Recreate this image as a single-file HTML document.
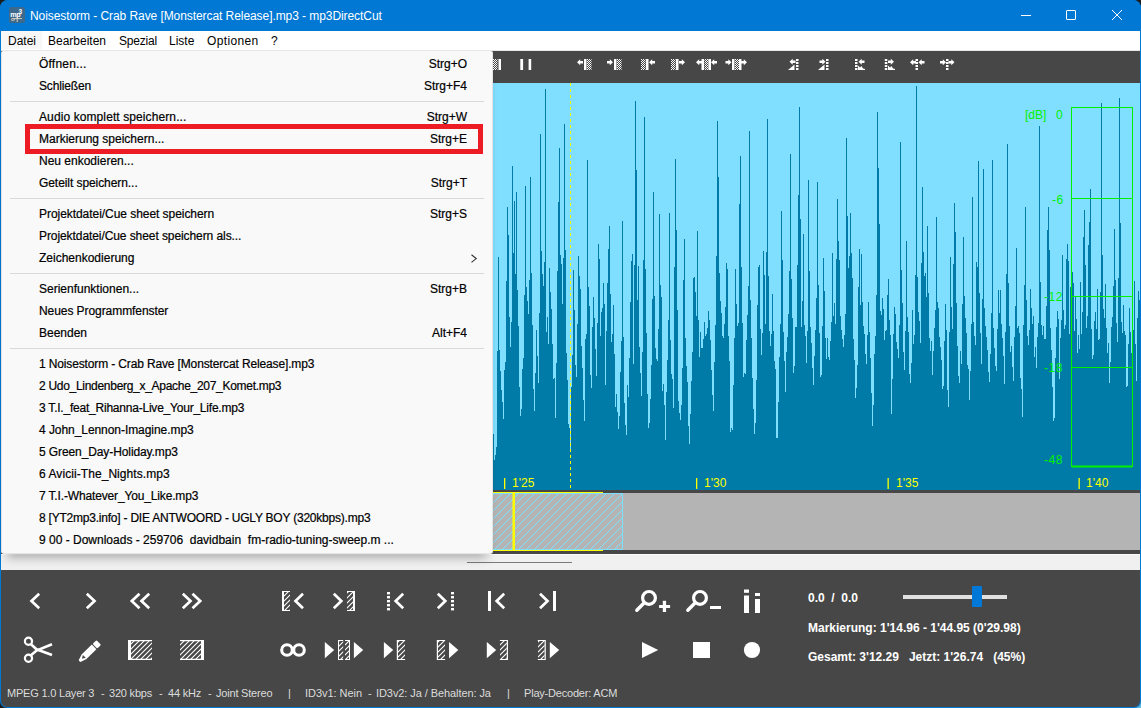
<!DOCTYPE html>
<html><head><meta charset="utf-8">
<style>
*{margin:0;padding:0;box-sizing:border-box}
html,body{width:1141px;height:708px;overflow:hidden;background:#1c1c1c;font-family:"Liberation Sans",sans-serif}
#win{position:absolute;left:0;top:0;width:1141px;height:708px;background:#0078d4;border-radius:8px 8px 7px 7px;overflow:hidden}
.a{position:absolute}
.t{position:absolute;white-space:nowrap;font-size:12px;line-height:14px}
#title{left:0;top:0;width:1141px;height:31px;background:#0078d4}
#menubar{left:1px;top:31px;width:1139px;height:20px;background:#fff;border-bottom:1px solid #e6e6e6}
#tb{left:1px;top:51px;width:1139px;height:32px;background:#474747}
#ov{left:1px;top:490px;width:1139px;height:64px;background:#474747}
#split{left:1px;top:554px;width:1139px;height:16px;background:#f0f0f0}
#ctrl{left:1px;top:570px;width:1139px;height:137px;background:#474747;border-radius:0 0 6px 6px}
#menu{left:1px;top:51px;width:492px;height:503px;background:#f9f9f9;border:1px solid #e4e4e4;border-top:none;border-radius:2px 2px 3px 3px;box-shadow:0 9px 10px -6px rgba(0,0,0,.32)}
.mi{position:absolute;left:37px;font-size:12px;line-height:14px;color:#000;white-space:nowrap;-webkit-text-stroke:0.2px #000}
.sc{position:absolute;right:25px;font-size:12px;line-height:14px;color:#000;white-space:nowrap;text-align:right;-webkit-text-stroke:0.2px #000}
.sep{position:absolute;left:8px;width:474px;height:1px;background:#d9d9d9}
.st{position:absolute;top:687px;color:#dcdcdc;font-size:11px;line-height:13px;white-space:nowrap;letter-spacing:-0.2px}
.wt{position:absolute;color:#fff;font-size:12px;line-height:14px;font-weight:bold;white-space:nowrap}
.yl{position:absolute;top:476px;color:#ffff00;font-size:12px;line-height:14px;white-space:nowrap}
.gr{position:absolute;color:#00f000;font-size:12px;line-height:14px;white-space:nowrap}
</style></head><body>
<div class="a" style="left:1121px;top:688px;width:20px;height:20px;background:#64b8d8"></div>
<div class="a" style="left:0;top:688px;width:20px;height:20px;background:#1a1a1a"></div>
<div id="win">
 <div class="a" id="title">
  <svg class="a" style="left:9px;top:7px" width="16" height="16" viewBox="0 0 16 16">
   <rect x="0" y="0" width="16" height="16" rx="2" fill="#3d6a8c"/>
   <text x="1.3" y="9.6" font-size="7.2" font-family="Liberation Sans" fill="#fff" font-weight="bold" letter-spacing="-0.4">mp</text>
   <text x="9.6" y="7.2" font-size="6.5" font-family="Liberation Sans" fill="#fff" font-weight="bold">3</text>
   <path d="M2.5 11.6H13M8.2 9.5V15M2 12.8Q3.5 14 6 12.6" stroke="#e6d9c6" stroke-width="0.9" fill="none"/>
  </svg>
  <div class="t" style="left:30px;top:9px;color:#fff;letter-spacing:-0.07px">Noisestorm - Crab Rave [Monstercat Release].mp3 - mp3DirectCut</div>
  <div class="a" style="left:1021px;top:15px;width:10px;height:1px;background:#fff"></div>
  <div class="a" style="left:1066px;top:10px;width:10px;height:10px;border:1px solid #fff;border-radius:1px"></div>
  <svg class="a" style="left:1111px;top:9px" width="12" height="12" viewBox="0 0 12 12"><path d="M1 1L11 11M11 1L1 11" stroke="#fff" stroke-width="1"/></svg>
 </div>
 <div class="a" id="menubar">
  <div class="a" style="left:0;top:0;width:41px;height:18px;background:#f7f7f7"></div>
  <div class="t" style="left:7px;top:3px">Datei</div>
  <div class="t" style="left:47px;top:3px">Bearbeiten</div>
  <div class="t" style="left:118px;top:3px;letter-spacing:-0.2px">Spezial</div>
  <div class="t" style="left:168px;top:3px">Liste</div>
  <div class="t" style="left:206px;top:3px;letter-spacing:0.35px">Optionen</div>
  <div class="t" style="left:270px;top:3px">?</div>
 </div>
 <div class="a" id="tb"></div>
 <svg class="a" style="left:0;top:0" width="1141" height="570" viewBox="0 0 1141 570">
  <defs>
   <pattern id="chk" width="2" height="2" patternUnits="userSpaceOnUse">
    <rect x="0" y="0" width="1" height="1" fill="#fff"/><rect x="1" y="1" width="1" height="1" fill="#fff"/>
   </pattern>
   <pattern id="hatch" x="3" y="1" width="8" height="8" patternUnits="userSpaceOnUse">
    <path d="M-1 9L9 -1M-5 5L5 -5M3 13L13 3" stroke="#80dfff" stroke-width="1"/>
   </pattern>
   <g id="al"><path d="M0 2.75L3.2 -0.2V1.5H6V4H3.2V5.7Z" fill="#fff"/></g>
   <g id="ar"><path d="M6 2.75L2.8 -0.2V1.5H0V4H2.8V5.7Z" fill="#fff"/></g>
   <g id="dots"><rect x="0" y="0" width="2.5" height="2" fill="#fff"/><rect x="0" y="3" width="2.5" height="2" fill="#fff"/><rect x="0" y="6" width="2.5" height="2" fill="#fff"/><rect x="0" y="9" width="2.5" height="2" fill="#fff"/></g>
  </defs>
  <!-- waveform -->
  <rect x="1" y="83" width="1139" height="407" fill="#80dfff"/>
  <path d="M493 490V434H494V460H495V455H496V447H497V351H498V257H499V350H500V371H501V390H502V402H503V419H504V370H505V362H506V281H507V207H508V235H509V317H510V347H511V322H512V166H513V253H514V201H515V274H516V192H517V290H518V326H519V387H520V416H521V409H522V369H523V358H524V295H525V186H526V287H527V301H528V314H529V280H530V177H531V273H532V325H533V389H534V411H535V373H536V330H537V356H538V383H539V313H540V134H541V251H542V274H543V286H544V262H545V89H546V332H547V317H548V344H549V268H550V292H551V309H552V344H553V379H554V378H555V418H556V363H557V271H558V202H559V148H560V255H561V264H562V304H563V258H564V124H565V250H566V353H567V380H568V424H569V428H570V451H571V387H572V355H573V270H574V310H575V365H576V377H577V324H578V256H579V276H580V289H581V346H582V368H583V400H584V421H585V339H586V334H587V160H588V287H589V306H590V375H591V388H592V327H593V297H594V318H595V349H596V376H597V323H598V244H599V259H600V336H601V312H602V308H603V283H604V304H605V385H606V331H607V283H608V249H609V226H610V294H611V342H612V334H613V305H614V354H615V407H616V394H617V412H618V429H619V416H620V372H621V341H622V221H623V337H624V403H625V425H626V435H627V385H628V397H629V358H630V302H631V261H632V254H633V364H634V265H635V101H636V170H637V300H638V266H639V347H640V373H641V396H642V352H643V260H644V117H645V269H646V333H647V394H648V428H649V423H650V399H651V365H652V299H653V192H654V296H655V348H656V359H657V361H658V329H659V214H660V285H661V297H662V391H663V384H664V405H665V440H666V392H667V360H668V320H669V213H670V340H671V374H672V379H673V408H674V267H675V159H676V230H677V310H678V401H679V413H680V420H681V405H682V368H683V280H684V239H685V338H686V366H687V382H688V426H689V444H690V414H691V381H692V352H693V278H694V277H695V292H696V316H697V231H698V320H699V357H700V332H701V348H702V348H703V339H704V322H705V336H706V334H707V328H708V311H709V320H710V340H711V370H712V395H713V411H714V362H715V325H716V256H717V121H718V177H719V273H720V301H721V313H722V336H723V338H724V324H725V307H726V263H727V269H728V336H729V361H730V432H731V428H732V430H733V385H734V338H735V269H736V304H737V326H738V323H739V204H740V156H741V267H742V323H743V377H744V373H745V374H746V340H747V315H748V286H749V131H750V300H751V338H752V378H753V409H754V434H755V423H756V380H757V305H758V267H759V265H760V329H761V355H762V333H763V251H764V275H765V324H766V252H767V119H768V276H769V331H770V346H771V334H772V294H773V331H774V361H775V369H776V438H777V438H778V402H779V357H780V324H781V211H782V260H783V332H784V361H785V392H786V352H787V337H788V314H789V271H790V154H791V279H792V318H793V373H794V366H795V327H796V327H797V265H798V195H799V107H800V219H801V327H802V301H803V234H804V325H805V336H806V363H807V331H808V180H809V271H810V327H811V343H812V368H813V385H814V356H815V330H816V298H817V182H818V285H819V333H820V377H821V375H822V326H823V258H824V291H825V338H826V359H827V338H828V357H829V360H830V341H831V322H832V253H833V316H834V303H835V324H836V259H837V199H838V241H839V260H840V316H841V330H842V339H843V347H844V335H845V314H846V138H847V216H848V268H849V256H850V213H851V253H852V278H853V339H854V360H855V398H856V388H857V365H858V287H859V249H860V305H861V254H862V302H863V326H864V334H865V354H866V364H867V335H868V302H869V332H870V358H871V393H872V426H873V405H874V354H875V336H876V295H877V112H878V168H879V224H880V311H881V315H882V298H883V309H884V340H885V331H886V330H887V295H888V279H889V320H890V335H891V414H892V379H893V334H894V307H895V314H896V342H897V349H898V358H899V325H900V142H901V270H902V303H903V352H904V370H905V331H906V241H907V317H908V332H909V374H910V383H911V363H912V310H913V344H914V335H915V275H916V86H917V277H918V312H919V321H920V343H921V263H922V187H923V252H924V276H925V273H926V297H927V226H928V293H929V338H930V351H931V341H932V375H933V351H934V328H935V310H936V217H937V302H938V308H939V337H940V347H941V360H942V389H943V386H944V341H945V304H946V330H947V390H948V407H949V332H950V257H951V307H952V329H953V264H954V203H955V232H956V303H957V346H958V376H959V383H960V351H961V364H962V304H963V237H964V296H965V318H966V333H967V365H968V369H969V400H970V371H971V324H972V197H973V322H974V336H975V345H976V262H977V267H978V161H979V293H980V333H981V364H982V299H983V169H984V308H985V326H986V337H987V350H988V372H989V382H990V354H991V313H992V160H993V328H994V348H995V366H996V371H997V329H998V290H999V313H1000V290H1001V324H1002V338H1003V356H1004V384H1005V332H1006V274H1007V144H1008V283H1009V326H1010V352H1011V346H1012V367H1013V381H1014V337H1015V306H1016V248H1017V328H1018V326H1019V333H1020V378H1021V389H1022V417H1023V325H1024V285H1025V207H1026V300H1027V336H1028V345H1029V330H1030V289H1031V308H1032V324H1033V316H1034V357H1035V347H1036V368H1037V337H1038V323H1039V126H1040V282H1041V325H1042V335H1043V326H1044V339H1045V339H1046V306H1047V230H1048V207H1049V250H1050V328H1051V350H1052V387H1053V421H1054V418H1055V358H1056V327H1057V311H1058V319H1059V379H1060V338H1061V320H1062V255H1063V310H1064V329H1065V325H1066V259H1067V244H1068V261H1069V334H1070V287H1071V175H1072V272H1073V283H1074V331H1075V296H1076V319H1077V353H1078V335H1079V349H1080V282H1081V334H1082V312H1083V237H1084V210H1085V265H1086V328H1087V316H1088V245H1089V222H1090V189H1091V329H1092V359H1093V355H1094V321H1095V312H1096V329H1097V289H1098V340H1099V339H1100V292H1101V103H1102V255H1103V309H1104V318H1105V284H1106V328H1107V353H1108V343H1109V383H1110V362H1111V327H1112V317H1113V286H1114V229H1115V280H1116V323H1117V342H1118V278H1119V98H1120V223H1121V322H1122V333H1123V305H1124V331H1125V335H1126V387H1127V386H1128V344H1129V308H1130V332H1131V353H1132V363H1133V330H1134V281H1135V344H1136V381H1137V318H1138V291H1139V300H1140V490Z" fill="#007ba7"/>
  <!-- toolbar icons -->
  <g fill="#fff">
   <rect x="493" y="59" width="4.5" height="11" fill="url(#chk)"/><rect x="498.5" y="59" width="2.5" height="11"/>
   <rect x="520.3" y="59" width="2.8" height="11"/><rect x="528.6" y="59" width="2.6" height="11"/>
   <use href="#al" x="577" y="59.5"/><rect x="584" y="59" width="2.5" height="11"/><rect x="587" y="59" width="4.5" height="11" fill="url(#chk)"/>
   <use href="#ar" x="607" y="59.5"/><rect x="614" y="59" width="2.5" height="11"/><rect x="617" y="59" width="4.5" height="11" fill="url(#chk)"/>
   <rect x="641" y="59" width="4.5" height="11" fill="url(#chk)"/><rect x="646" y="59" width="2.5" height="11"/><use href="#al" x="649" y="59.5"/>
   <rect x="671" y="59" width="4.5" height="11" fill="url(#chk)"/><rect x="676" y="59" width="2.5" height="11"/><use href="#ar" x="679" y="59.5"/>
   <use href="#al" x="696" y="59.5"/><rect x="701.5" y="59" width="2.5" height="11"/><rect x="704.5" y="59" width="4" height="11" fill="url(#chk)"/><rect x="708.5" y="59" width="2.5" height="11"/><use href="#al" x="711" y="59.5"/>
   <use href="#ar" x="725.5" y="59.5"/><rect x="732" y="59" width="2.5" height="11"/><rect x="735" y="59" width="4" height="11" fill="url(#chk)"/><rect x="739" y="59" width="2.5" height="11"/><use href="#ar" x="741" y="59.5"/>
   <use href="#al" x="789.5" y="59"/><path d="M788 70L794.5 64.5V70Z"/><use href="#dots" x="796" y="59"/>
   <use href="#ar" x="819.5" y="59"/><path d="M818 70L824.5 64.5V70Z"/><use href="#dots" x="826" y="59"/>
   <use href="#dots" x="855" y="59"/><use href="#al" x="858.5" y="59"/><path d="M858 70V65.5L860 67.5L861.5 66L863 68.5L865 69V70Z"/>
   <use href="#dots" x="884.8" y="59"/><use href="#ar" x="888" y="59"/><path d="M888 70V65.5L890 67.5L891.5 66L893 68.5L895 69V70Z"/>
   <use href="#al" x="910" y="59.5"/><use href="#dots" x="915.5" y="59"/><use href="#al" x="918.5" y="59.5"/>
   <use href="#ar" x="940" y="59.5"/><use href="#dots" x="946" y="59"/><use href="#ar" x="948.5" y="59.5"/>
  </g>
  <!-- dB meter -->
  <g stroke="#00f000" stroke-width="1" fill="none">
   <rect x="1071.5" y="107.5" width="61" height="359"/>
   <path d="M1071.5 198.5H1132.5M1071.5 296.5H1132.5M1071.5 367.5H1132.5"/>
   <path d="M1071.5 466.5H1132.5" stroke-width="2"/>
  </g>
  <!-- yellow dashed cursor -->
  <path d="M570.5 83V490" stroke="#ffff00" stroke-width="1" stroke-dasharray="3 3"/>
  <!-- yellow ticks -->
  <g fill="#ffff00"><rect x="504" y="478" width="1.3" height="11"/><rect x="696" y="478" width="1.3" height="11"/><rect x="887.5" y="478" width="1.3" height="11"/><rect x="1078.5" y="478" width="1.3" height="11"/></g>
  <!-- overview -->
  <rect x="1" y="490" width="1139" height="64" fill="#474747"/>
  <rect x="1" y="493" width="1139" height="57" fill="#b4b4b4"/>
  <rect x="1" y="494" width="621" height="55" fill="url(#hatch)"/>
  <path d="M1 493.5H622.5V549.5H1" fill="none" stroke="#80dfff" stroke-width="1"/>
  <rect x="1" y="492" width="602" height="1" fill="#ffff00"/>
  <rect x="1" y="550" width="602" height="1" fill="#ffff00"/>
  <rect x="512.5" y="493" width="2.5" height="57" fill="#ffff00"/>
  <rect x="1" y="554" width="1139" height="16" fill="#f0f0f0"/>
  <rect x="1" y="554" width="1139" height="1" fill="#fafafa"/>
  <rect x="467" y="562" width="105" height="1" fill="#7a7a7a"/>
 </svg>
 <div class="yl" style="left:512px">1'25</div>
 <div class="yl" style="left:704px">1'30</div>
 <div class="yl" style="left:896px">1'35</div>
 <div class="yl" style="left:1086px">1'40</div>
 <div class="gr" style="left:1025px;top:108px">[dB]</div>
 <div class="gr" style="left:1056px;top:108px">0</div>
 <div class="gr" style="left:1052px;top:193px;letter-spacing:0.5px">-6</div>
 <div class="gr" style="left:1044px;top:290px;letter-spacing:0.6px">-12</div>
 <div class="gr" style="left:1044px;top:361px;letter-spacing:0.6px">-18</div>
 <div class="gr" style="left:1044px;top:453px;letter-spacing:0.6px">-48</div>

 <div class="a" id="ctrl"></div>
 <svg class="a" style="left:0;top:570px" width="1141" height="138" viewBox="0 570 1141 138">
  <defs>
   <pattern id="h2" x="0" y="0" width="5" height="5" patternUnits="userSpaceOnUse">
    <path d="M-1 6L6 -1M-1 1L1 -1M4 6L6 4" stroke="#fff" stroke-width="1.1"/>
   </pattern>
  </defs>
  <g fill="none" stroke="#fff" stroke-width="2.7" stroke-linecap="butt" stroke-linejoin="miter">
   <path d="M39.2 593.8L31.5 601L39.2 608.2"/>
   <path d="M86.8 593.8L94.5 601L86.8 608.2"/>
   <path d="M139.5 593.8L131.8 601L139.5 608.2M149.2 593.8L141.5 601L149.2 608.2"/>
   <path d="M182.8 593.8L190.5 601L182.8 608.2M192.5 593.8L200.2 601L192.5 608.2"/>
   <path d="M303 593.8L295.5 601L303 608.2"/>
   <path d="M333.8 593.8L341.3 601L333.8 608.2"/>
   <path d="M403.2 593.8L395.7 601L403.2 608.2"/>
   <path d="M437.8 593.8L445.3 601L437.8 608.2"/>
   <path d="M504.2 593.8L496.7 601L504.2 608.2"/>
   <path d="M540 593.8L547.5 601L540 608.2"/>
  </g>
  <g fill="#fff">
   <rect x="387" y="592" width="3" height="2.4"/><rect x="387" y="596" width="3" height="2.4"/><rect x="387" y="600" width="3" height="2.4"/><rect x="387" y="604" width="3" height="2.4"/><rect x="387" y="608" width="3" height="2.4"/>
   <rect x="451" y="592" width="3" height="2.4"/><rect x="451" y="596" width="3" height="2.4"/><rect x="451" y="600" width="3" height="2.4"/><rect x="451" y="604" width="3" height="2.4"/><rect x="451" y="608" width="3" height="2.4"/>
   <rect x="488" y="591" width="3" height="20"/>
   <rect x="553" y="591" width="3" height="20"/>
  </g>
  <!-- row1 brackets -->
  <rect x="284" y="592" width="6" height="18" fill="url(#h2)"/>
  <path d="M282 591H290V592H284V610H290V611H282Z" fill="#fff"/>
  <rect x="347" y="592" width="6" height="18" fill="url(#h2)"/>
  <path d="M355 591H347V592H353V610H347V611H355Z" fill="#fff"/>
  <!-- scissors -->
  <g fill="none" stroke="#fff" stroke-width="2.2">
   <circle cx="28.5" cy="641.3" r="3.6"/><circle cx="28.5" cy="658.3" r="3.6"/>
  </g>
  <path d="M31 644.3L36.5 649.3L52 655" stroke="#fff" stroke-width="2.6" fill="none"/>
  <path d="M31 655.3L36.5 650.5L52 644.2" stroke="#fff" stroke-width="2.6" fill="none"/>
  <g transform="translate(79.6,661) rotate(-44)">
   <path d="M0 -1.3Q-0.6 0 0 1.3L6.3 3.3H20.2V-3.3H6.3Z" fill="#fff"/>
   <path d="M3.2 0L6.6 -2V2Z" fill="#474747"/>
   <rect x="21.2" y="-3.3" width="5.5" height="6.6" rx="1.2" fill="#fff"/>
  </g>
  <!-- big brackets -->
  <rect x="131" y="641" width="21" height="18" fill="url(#h2)"/>
  <path d="M128 640H152V641.3H131V658.7H152V660H128Z" fill="#fff"/>
  <rect x="180" y="641" width="21" height="18" fill="url(#h2)"/>
  <path d="M204 640H180V641.3H201V658.7H180V660H204Z" fill="#fff"/>
  <!-- infinity -->
  <g fill="none" stroke="#fff" stroke-width="3.1"><circle cx="287" cy="650" r="5.3"/><circle cx="299" cy="650" r="5.3"/></g>
  <g fill="#fff">
   <path d="M324.8 642V658.2L334.2 650.1Z"/><path d="M353.9 642V658.2L363.2 650.1Z"/>
   <path d="M383.9 642V658.2L393.2 650.1Z"/>
   <path d="M449 642V658.2L458.3 650.1Z"/>
   <path d="M486.8 642V658.2L496.2 650.1Z"/>
   <path d="M549.8 642V658.2L559.2 650.1Z"/>
   <path d="M642 642V658L658.2 650Z"/>
   <rect x="693" y="642" width="17" height="16"/>
   <circle cx="752" cy="650" r="8.1"/>
   <rect x="744" y="589.5" width="5" height="3.3"/><rect x="744" y="595.5" width="5" height="17.5"/>
   <rect x="755" y="593" width="5" height="3"/><rect x="755" y="599" width="5" height="14"/>
   <rect x="659.1" y="605" width="11" height="3"/><rect x="662.8" y="600.8" width="3.3" height="11.2"/>
   <rect x="710" y="606" width="11" height="3"/>
  </g>
  <!-- small brackets row2 -->
  <rect x="339" y="641" width="4.2" height="18" fill="url(#h2)"/><path d="M338 640H343.2V641H339V659H343.2V660H338Z" fill="#fff"/>
  <rect x="345" y="641" width="4" height="18" fill="url(#h2)"/><path d="M350 640H345V641H349V659H345V660H350Z" fill="#fff"/>
  <rect x="398" y="641" width="7" height="18" fill="url(#h2)"/><path d="M396.8 640H405.1V641H398V659H405.1V660H396.8Z" fill="#fff"/>
  <rect x="438" y="641" width="7" height="18" fill="url(#h2)"/><path d="M436.8 640H445.1V641H438V659H445.1V660H436.8Z" fill="#fff"/>
  <rect x="500" y="641" width="6.8" height="18" fill="url(#h2)"/><path d="M508 640H499.9V641H506.8V659H499.9V660H508Z" fill="#fff"/>
  <rect x="538" y="641" width="6.6" height="18" fill="url(#h2)"/><path d="M545.8 640H537.8V641H544.6V659H537.8V660H545.8Z" fill="#fff"/>
  <!-- magnifiers -->
  <g fill="none" stroke="#fff">
   <circle cx="649" cy="597.9" r="6.4" stroke-width="3.2"/><path d="M643.5 603.5L636.8 610.2" stroke-width="3.4" stroke-linecap="round"/>
   <circle cx="700" cy="597.9" r="6.4" stroke-width="3.2"/><path d="M694.5 603.5L687.8 610.2" stroke-width="3.4" stroke-linecap="round"/>
  </g>
  <!-- slider -->
  <rect x="903" y="595" width="104" height="4" fill="#e0e0e0"/>
  <rect x="972" y="586" width="10" height="21" fill="#0078d7" rx="1"/>
 </svg>
 <div class="wt" style="left:808px;top:591px">0.0&nbsp; /&nbsp; 0.0</div>
 <div class="wt" style="left:808px;top:621px">Markierung: 1'14.96 - 1'44.95 (0'29.98)</div>
 <div class="wt" style="left:808px;top:650px">Gesamt: 3'12.29&nbsp;&nbsp; Jetzt: 1'26.74&nbsp;&nbsp; (45%)</div>
 <div class="st" style="left:7px">MPEG 1.0 Layer 3</div>
 <div class="st" style="left:101px">-</div>
 <div class="st" style="left:109px">320 kbps</div>
 <div class="st" style="left:159px">-</div>
 <div class="st" style="left:168px">44 kHz</div>
 <div class="st" style="left:208px">-</div>
 <div class="st" style="left:216px">Joint Stereo</div>
 <div class="st" style="left:288px">|</div>
 <div class="st" style="left:305px;letter-spacing:-0.04px">ID3v1: Nein</div>
 <div class="st" style="left:368px">-</div>
 <div class="st" style="left:376px;letter-spacing:-0.08px">ID3v2: Ja / Behalten: Ja</div>
 <div class="st" style="left:507px">|</div>
 <div class="st" style="left:524px">Play-Decoder: ACM</div>

 <div class="a" id="menu">
  <div class="mi" style="top:6px;letter-spacing:0.2px">Öffnen...</div><div class="sc" style="top:6px">Strg+O</div>
  <div class="mi" style="top:28px;letter-spacing:-0.14px">Schließen</div><div class="sc" style="top:28px">Strg+F4</div>
  <div class="sep" style="top:50px"></div>
  <div class="mi" style="top:59px;letter-spacing:0.1px">Audio komplett speichern...</div><div class="sc" style="top:59px">Strg+W</div>
  <div class="mi" style="top:81px">Markierung speichern...</div><div class="sc" style="top:81px">Strg+E</div>
  <div class="mi" style="top:103px">Neu enkodieren...</div>
  <div class="mi" style="top:125px;letter-spacing:-0.07px">Geteilt speichern...</div><div class="sc" style="top:125px">Strg+T</div>
  <div class="sep" style="top:147px"></div>
  <div class="mi" style="top:156px;letter-spacing:-0.05px">Projektdatei/Cue sheet speichern</div><div class="sc" style="top:156px">Strg+S</div>
  <div class="mi" style="top:178px;letter-spacing:-0.08px">Projektdatei/Cue sheet speichern als...</div>
  <div class="mi" style="top:200px">Zeichenkodierung</div><svg class="a" style="left:468px;top:203px" width="10" height="10" viewBox="0 0 10 10"><path d="M1.5 0.8L6.2 4.6L1.5 8.4" fill="none" stroke="#333" stroke-width="1.1"/></svg>
  <div class="sep" style="top:222px"></div>
  <div class="mi" style="top:231px">Serienfunktionen...</div><div class="sc" style="top:231px">Strg+B</div>
  <div class="mi" style="top:253px;letter-spacing:-0.07px">Neues Programmfenster</div>
  <div class="mi" style="top:275px">Beenden</div><div class="sc" style="top:275px">Alt+F4</div>
  <div class="sep" style="top:297px"></div>
  <div class="mi" style="top:306px;letter-spacing:-0.14px">1 Noisestorm - Crab Rave [Monstercat Release].mp3</div>
  <div class="mi" style="top:328px;letter-spacing:-0.29px">2 Udo_Lindenberg_x_Apache_207_Komet.mp3</div>
  <div class="mi" style="top:350px;letter-spacing:-0.22px">3 T.I._feat_Rihanna-Live_Your_Life.mp3</div>
  <div class="mi" style="top:372px;letter-spacing:-0.06px">4 John_Lennon-Imagine.mp3</div>
  <div class="mi" style="top:394px;letter-spacing:-0.1px">5 Green_Day-Holiday.mp3</div>
  <div class="mi" style="top:416px;letter-spacing:0.07px">6 Avicii-The_Nights.mp3</div>
  <div class="mi" style="top:438px;letter-spacing:-0.15px">7 T.I.-Whatever_You_Like.mp3</div>
  <div class="mi" style="top:460px;letter-spacing:-0.22px">8 [YT2mp3.info] - DIE ANTWOORD - UGLY BOY (320kbps).mp3</div>
  <div class="mi" style="top:482px">9 00 - Downloads - 259706&nbsp; davidbain&nbsp; fm-radio-tuning-sweep.m ...</div>
 </div>
 <div class="a" style="left:25px;top:124px;width:458px;height:30px;border:5px solid #ed1c24"></div>
</div>
</body></html>
